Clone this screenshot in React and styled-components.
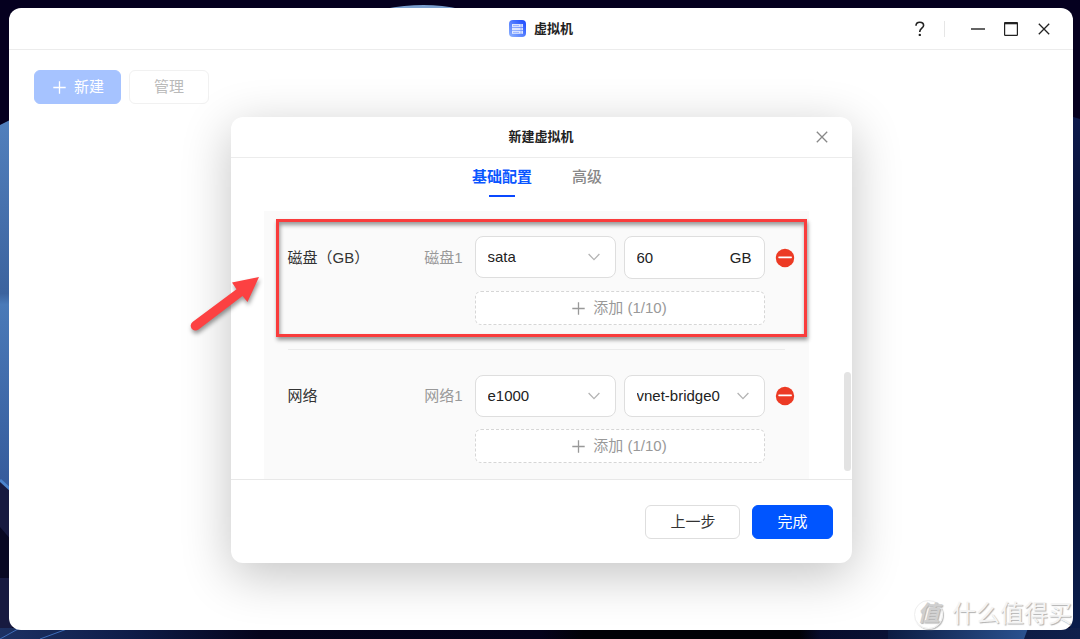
import React from 'react';
import styled, { createGlobalStyle } from 'styled-components';

const GlobalStyle = createGlobalStyle`
  * {
    box-sizing: border-box;
  }

  body {
    margin: 0;
    background: #05001f;
    color: #222;
    font-family: "Liberation Sans", "Noto Sans CJK SC", sans-serif;
    font-size: 15px;
    line-height: 22px;
  }

  button, input, select {
    font: inherit;
    color: inherit;
  }
`;

const Wallpaper = () => (
  <WallpaperSvg viewBox="0 0 1080 639" preserveAspectRatio="none" aria-hidden="true">
    <defs>
      <linearGradient id="petal" x1="0" y1="0" x2="0" y2="1">
        <stop offset="0%" stopColor="#5180bd" />
        <stop offset="47%" stopColor="#3c639e" />
        <stop offset="50%" stopColor="#4a7ab8" />
        <stop offset="100%" stopColor="#355a9b" />
      </linearGradient>
      <linearGradient id="rightEdge" x1="0" y1="0" x2="0" y2="1">
        <stop offset="0%" stopColor="#0d1a4c" />
        <stop offset="35%" stopColor="#030828" />
        <stop offset="100%" stopColor="#0a1d4c" />
      </linearGradient>
      <linearGradient id="floor" x1="0" y1="0" x2="1" y2="0">
        <stop offset="0%" stopColor="#1d3163" />
        <stop offset="12%" stopColor="#0e1c48" />
        <stop offset="24%" stopColor="#05041c" />
        <stop offset="50%" stopColor="#04021c" />
        <stop offset="54%" stopColor="#010106" />
        <stop offset="74%" stopColor="#010106" />
        <stop offset="76%" stopColor="#070c2c" />
        <stop offset="100%" stopColor="#10204c" />
      </linearGradient>
      <linearGradient id="glow" x1="0" y1="0" x2="1" y2="0">
        <stop offset="0%" stopColor="#0c1c42" />
        <stop offset="100%" stopColor="#2b5290" />
      </linearGradient>
    </defs>
    <rect width="1080" height="639" fill="#05001f" />
    <path d="M384 9 Q425 1 460 9Z" fill="#7a9fce" />
    <path d="M0 125 L12 119 V490 L0 480Z" fill="url(#petal)" />
    <path d="M0 480 L12 491 V639 H0Z" fill="#171a40" />
    <path d="M0 480 L12 491" stroke="#4c83cc" strokeWidth="3" />
    <path d="M0 527 L12 541 V578 H0Z" fill="#080822" />
    <path d="M1070 116 L1080 119 V639 H1070Z" fill="url(#rightEdge)" />
    <rect y="628" width="1080" height="11" fill="url(#floor)" />
    <path d="M0 639 L18 629 M40 639 L67 629" stroke="#3f6cb8" strokeWidth="1" />
    <path d="M888 639 V628 H1028 L1024 639Z" fill="url(#glow)" />
  </WallpaperSvg>
);

const AppLogo = () => (
  <svg width="17" height="17" viewBox="0 0 17 17" aria-hidden="true">
    <defs>
      <linearGradient id="logoFill" x1="1" y1="0" x2="0" y2="1">
        <stop offset="0%" stopColor="#1746ff" />
        <stop offset="100%" stopColor="#8fb4ff" />
      </linearGradient>
    </defs>
    <rect width="17" height="17" rx="4" fill="url(#logoFill)" />
    <g fill="#fff" fillOpacity="0.8">
      <rect x="3" y="4" width="11" height="3.2" />
      <rect x="3" y="7.8" width="11" height="2.6" />
      <rect x="3" y="11" width="11" height="2.8" />
    </g>
    <path d="M4 5.6H10M4 12.4H10M12 4V14" stroke="#6a90ff" strokeWidth="0.6" />
  </svg>
);

const CloseIcon = () => (
  <svg width="12" height="12" viewBox="0 0 12 12" fill="none" stroke="currentColor" strokeWidth="1.3" aria-hidden="true">
    <path d="M0.8 0.8L11.2 11.2M11.2 0.8L0.8 11.2" />
  </svg>
);

const PlusIcon = () => (
  <svg width="13" height="13" viewBox="0 0 13 13" fill="none" stroke="currentColor" strokeWidth="1.3" aria-hidden="true">
    <path d="M6.5 0.3V12.7M0.3 6.5H12.7" />
  </svg>
);

const RemoveIcon = () => (
  <svg width="20" height="20" viewBox="0 0 20 20" aria-hidden="true">
    <circle cx="10" cy="10" r="9.2" fill="#ec3a24" />
    <rect x="3.3" y="8.6" width="13.6" height="1.6" rx="0.6" fill="#fff" />
  </svg>
);

const Dropdown = ({ label, value }) => (
  <SelectBox>
    <select aria-label={label} defaultValue={value}>
      <option value={value}>{value}</option>
    </select>
    <svg width="12" height="8" viewBox="0 0 12 8" fill="none" stroke="#b4b4b4" strokeWidth="1.3" aria-hidden="true">
      <path d="M0.6 1L6 6.6L11.4 1" />
    </svg>
  </SelectBox>
);

const DeviceGroup = ({ title, name, divided, children, annotation }) => (
  <Group $divided={divided}>
    <GroupTitle>{title}</GroupTitle>
    <DeviceName>{name}</DeviceName>
    <Fields>{children}</Fields>
    <RemoveButton type="button" aria-label={`删除${name}`}>
      <RemoveIcon />
    </RemoveButton>
    <AddButton type="button">
      <PlusIcon />
      添加 (1/10)
    </AddButton>
    {annotation}
  </Group>
);

const DiskAnnotation = () => (
  <Highlight>
    <Arrow width="76" height="66" viewBox="0 0 76 66" aria-hidden="true">
      <path
        d="M4.5 50 L48.5 17.2 L44 10.5 L71 5 L59.5 30 L54.5 24 L10.5 57.5 A4.6 4.6 0 0 1 4.5 50Z"
        fill="#fc4142"
      />
    </Arrow>
  </Highlight>
);

const App = () => {
  return (
    <Desktop>
      <GlobalStyle />
      <Wallpaper />
      <Window>
        <TitleBar>
          <AppTitle>
            <AppLogo />
            虚拟机
          </AppTitle>
          <WindowControls>
            <IconButton type="button" aria-label="帮助">
              <svg width="10" height="16" viewBox="0 0 10 16" fill="none" stroke="#222" strokeWidth="1.6" aria-hidden="true">
                <path d="M1 4.8C1 2.4 2.5 1.2 4.8 1.2C7.1 1.2 8.6 2.5 8.6 4.5C8.6 7 4.8 7.4 4.8 10.4V11" />
                <circle cx="4.8" cy="13.9" r="1.2" fill="#222" stroke="none" />
              </svg>
            </IconButton>
            <Separator />
            <IconButton type="button" aria-label="最小化">
              <svg width="14" height="14" viewBox="0 0 14 14" stroke="#222" strokeWidth="1.4" aria-hidden="true">
                <path d="M0 7H14" />
              </svg>
            </IconButton>
            <IconButton type="button" aria-label="最大化">
              <svg width="14" height="14" viewBox="0 0 14 14" fill="none" stroke="#222" aria-hidden="true">
                <rect x="0.6" y="0.6" width="12.8" height="12.8" rx="0.6" strokeWidth="1.2" />
                <path d="M0.4 1.4H13.6" strokeWidth="1.8" />
              </svg>
            </IconButton>
            <IconButton type="button" aria-label="关闭">
              <CloseIcon />
            </IconButton>
          </WindowControls>
        </TitleBar>

        <Content>
          <Toolbar>
            <ToolButton type="button" $primary>
              <PlusIcon />
              新建
            </ToolButton>
            <ToolButton type="button">管理</ToolButton>
          </Toolbar>

          <Overlay>
            <Dialog role="dialog" aria-labelledby="dialog-title">
              <DialogHeader>
                <h2 id="dialog-title">新建虚拟机</h2>
                <DialogClose type="button" aria-label="关闭">
                  <CloseIcon />
                </DialogClose>
              </DialogHeader>
              <Tabs role="tablist">
                <Tab type="button" role="tab" aria-selected="true" $active>基础配置</Tab>
                <Tab type="button" role="tab" aria-selected="false">高级</Tab>
              </Tabs>
              <DialogBody>
                <Panel>
                  <DeviceGroup title="磁盘（GB）" name="磁盘1" divided annotation={<DiskAnnotation />}>
                    <Dropdown label="磁盘1" value="sata" />
                    <SizeBox>
                      <input type="text" aria-label="磁盘1" defaultValue="60" />
                      <span>GB</span>
                    </SizeBox>
                  </DeviceGroup>
                  <DeviceGroup title="网络" name="网络1">
                    <Dropdown label="网络1" value="e1000" />
                    <Dropdown label="网络1" value="vnet-bridge0" />
                  </DeviceGroup>
                </Panel>
                <ScrollThumb />
              </DialogBody>
              <DialogFooter>
                <FooterButton type="button">上一步</FooterButton>
                <FooterButton type="button" $primary>完成</FooterButton>
              </DialogFooter>
            </Dialog>
          </Overlay>
        </Content>
      </Window>

      <Watermark>
        <WatermarkBadge>值</WatermarkBadge>
        什么值得买
      </Watermark>
    </Desktop>
  );
};

const Desktop = styled.div`
  position: relative;
  display: flex;
  min-height: 100vh;
  padding: 8px 7px 9px 9px;
  overflow: hidden;
`;

const WallpaperSvg = styled.svg`
  position: absolute;
  inset: 0;
  width: 100%;
  height: 100%;
`;

const Window = styled.main`
  position: relative;
  flex: 1;
  display: flex;
  flex-direction: column;
  background: #fff;
  border-radius: 12px;
`;

const TitleBar = styled.header`
  display: grid;
  grid-template-columns: 1fr auto 1fr;
  align-items: center;
  height: 42px;
  padding: 0 20px;
  border-bottom: 1px solid #ececec;
`;

const AppTitle = styled.h1`
  grid-column: 2;
  display: flex;
  align-items: center;
  gap: 8px;
  margin: 0;
  font-size: 13px;
  line-height: 20px;
  font-weight: 700;
`;

const WindowControls = styled.div`
  display: flex;
  align-items: center;
  justify-content: flex-end;
  gap: 15px;
`;

const IconButton = styled.button`
  display: grid;
  place-items: center;
  width: 18px;
  height: 18px;
  padding: 0;
  border: 0;
  background: none;
  color: #222;
`;

const Separator = styled.span`
  width: 1px;
  height: 16px;
  margin-right: 9px;
  background: #e6e6e6;
`;

const Content = styled.div`
  position: relative;
  flex: 1;
  display: flex;
  flex-direction: column;
`;

const Toolbar = styled.div`
  display: flex;
  gap: 8px;
  padding: 20px 25px;
`;

const ToolButton = styled.button`
  display: flex;
  align-items: center;
  gap: 8px;
  height: 34px;
  padding: ${(p) => (p.$primary ? '0 16px 0 18px' : '0 24px')};
  border: 1px solid ${(p) => (p.$primary ? '#a6c3ff' : '#f1f1f1')};
  border-radius: 6px;
  background: ${(p) => (p.$primary ? '#a6c3ff' : '#fff')};
  color: ${(p) => (p.$primary ? '#fff' : '#bababa')};
`;

const Overlay = styled.div`
  position: absolute;
  inset: 0;
  display: grid;
  place-items: center;
`;

const Dialog = styled.section`
  display: flex;
  flex-direction: column;
  width: 621px;
  max-width: 100%;
  background: #fff;
  border-radius: 12px;
  box-shadow: 0 12px 50px rgba(0, 0, 0, 0.24);
`;

const DialogHeader = styled.header`
  display: grid;
  grid-template-columns: 1fr auto 1fr;
  align-items: center;
  height: 41px;
  padding: 0 21px;
  border-bottom: 1px solid #ececec;

  h2 {
    grid-column: 2;
    margin: 0;
    font-size: 13px;
    line-height: 20px;
  }
`;

const DialogClose = styled(IconButton)`
  justify-self: end;
  color: #888;
`;

const Tabs = styled.div`
  display: flex;
  justify-content: center;
  gap: 40px;
  padding: 8px 8px 14px 0;
`;

const Tab = styled.button`
  display: flex;
  flex-direction: column;
  align-items: center;
  gap: 7px;
  padding: 0;
  border: 0;
  background: none;
  color: ${(p) => (p.$active ? '#0a56ff' : '#888')};
  font-weight: ${(p) => (p.$active ? 700 : 500)};

  &::after {
    content: '';
    width: 26px;
    height: 2px;
    background: ${(p) => (p.$active ? '#0a48ff' : 'transparent')};
  }
`;

const DialogBody = styled.div`
  position: relative;
  padding: 0 43px 0 33px;
`;

const Panel = styled.div`
  padding: 0 14px 0 24px;
  background: #fafafa;
`;

const Group = styled.div`
  position: relative;
  display: grid;
  grid-template-columns: 1fr auto minmax(0, 290px) 20px;
  align-items: center;
  gap: 12px 10px;
  padding: 25px 0 ${(p) => (p.$divided ? '25px' : '16px')};

  ${(p) =>
    p.$divided &&
    `
    &::after {
      content: '';
      position: absolute;
      left: 0;
      right: 10px;
      bottom: 0;
      height: 1px;
      background: #ebebeb;
    }
  `}
`;

const GroupTitle = styled.span`
  color: #333;
`;

const DeviceName = styled.span`
  padding-right: 2px;
  color: #999;
`;

const Fields = styled.div`
  display: grid;
  grid-template-columns: repeat(2, minmax(0, 1fr));
  align-items: start;
  gap: 8px;
`;

const SelectBox = styled.div`
  position: relative;

  select {
    display: block;
    width: 100%;
    height: 42px;
    padding: 0 32px 0 12px;
    border: 1px solid #dedede;
    border-radius: 8px;
    background: #fff;
    appearance: none;
  }

  svg {
    position: absolute;
    top: 17px;
    right: 16px;
    pointer-events: none;
  }
`;

const SizeBox = styled.label`
  display: flex;
  align-items: center;
  height: 43px;
  padding: 0 12px;
  border: 1px solid #dedede;
  border-radius: 8px;
  background: #fff;

  input {
    flex: 1;
    min-width: 0;
    padding: 0;
    border: 0;
    outline: 0;
    background: none;
  }
`;

const RemoveButton = styled.button`
  width: 20px;
  height: 20px;
  padding: 0;
  border: 0;
  background: none;

  svg {
    display: block;
  }
`;

const AddButton = styled.button`
  grid-column: 3;
  display: flex;
  align-items: center;
  justify-content: center;
  gap: 8px;
  height: 34px;
  border: 1px dashed #d6d6d6;
  border-radius: 6px;
  background: #fff;
  color: #999;
`;

const Highlight = styled.div`
  position: absolute;
  inset: 8px -12px 13px -12px;
  border: 3px solid #f93c3c;
  box-shadow: 1px 3px 4px rgba(0, 0, 0, 0.4), inset 1px 3px 4px rgba(0, 0, 0, 0.4);
  pointer-events: none;
`;

const Arrow = styled.svg`
  position: absolute;
  top: 50px;
  left: -91px;
  overflow: visible;
  filter: drop-shadow(1px 3px 2px rgba(0, 0, 0, 0.4));
`;

const ScrollThumb = styled.span`
  position: absolute;
  right: 1px;
  bottom: 8px;
  width: 7px;
  height: 99px;
  border-radius: 4px;
  background: #e3e3e3;
`;

const DialogFooter = styled.footer`
  display: flex;
  justify-content: flex-end;
  gap: 12px;
  padding: 25px 19px 24px;
  border-top: 1px solid #e8e8e8;
`;

const FooterButton = styled.button`
  height: 34px;
  padding: 0 24px;
  border: 1px solid ${(p) => (p.$primary ? '#0055ff' : '#dedede')};
  border-radius: 6px;
  background: ${(p) => (p.$primary ? '#0055ff' : '#fff')};
  color: ${(p) => (p.$primary ? '#fff' : '#333')};
`;

const Watermark = styled.div`
  position: absolute;
  right: 8px;
  bottom: 8px;
  display: flex;
  align-items: center;
  gap: 9px;
  color: #f4f4f4;
  font-size: 24px;
  line-height: 34px;
  text-shadow: 1px 1px 1px #b0b0b0;
`;

const WatermarkBadge = styled.span`
  display: grid;
  place-items: center;
  width: 29px;
  height: 29px;
  border: 1px solid #eee;
  border-radius: 50%;
  box-shadow: 1px 1px 1px #bbb;
  color: #d0d0d0;
  font-size: 22px;
  font-style: italic;
  font-weight: 700;
  line-height: 26px;
`;

export default App;
